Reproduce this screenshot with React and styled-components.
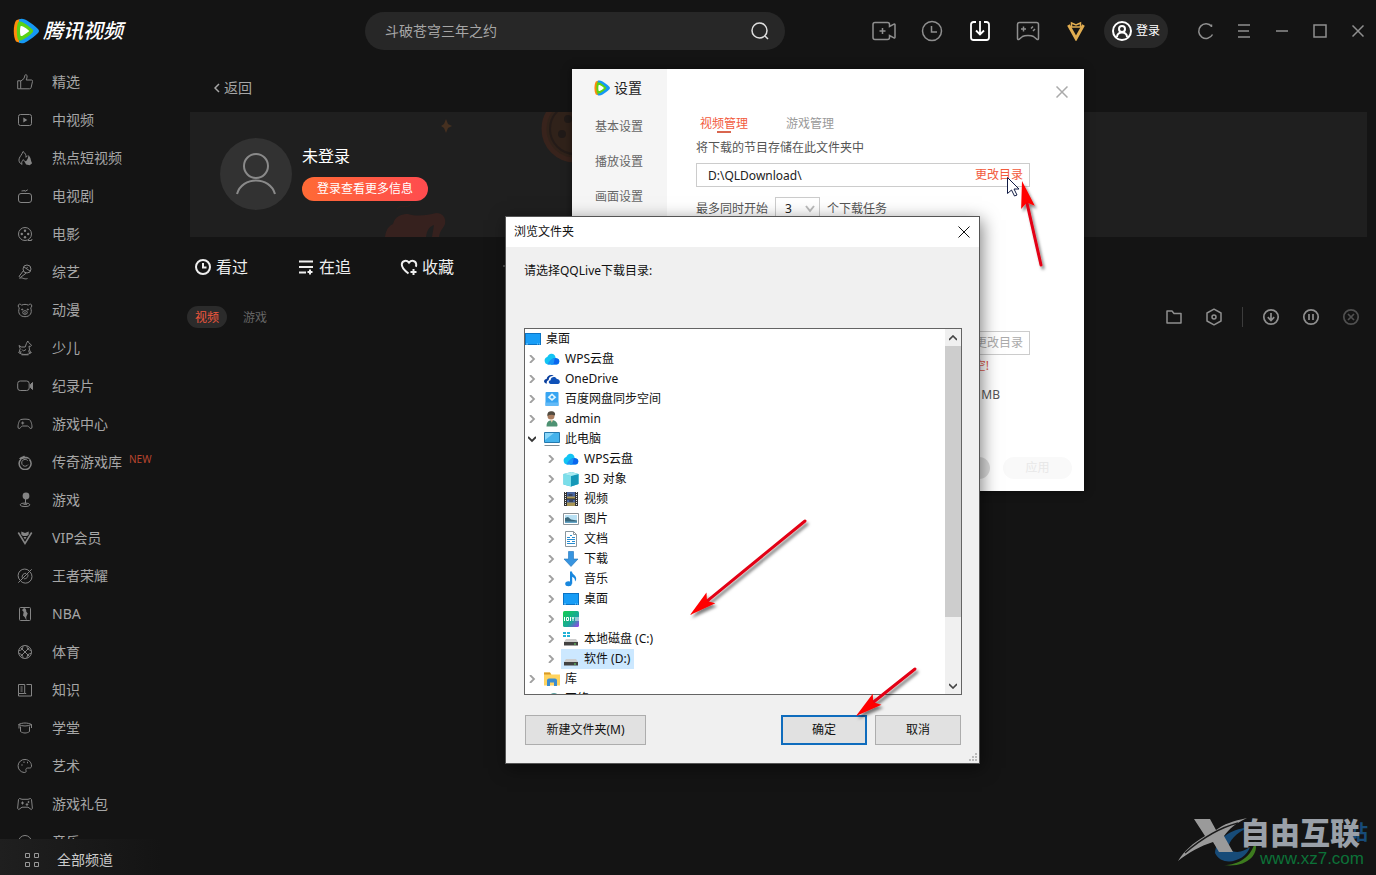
import React, { useState } from "react";
import styled, { createGlobalStyle } from "styled-components";

const channels = [
  { icon: "like", label: "精选" },
  { icon: "video", label: "中视频" },
  { icon: "fire", label: "热点短视频" },
  { icon: "tv", label: "电视剧" },
  { icon: "film", label: "电影" },
  { icon: "mic", label: "综艺" },
  { icon: "bear", label: "动漫" },
  { icon: "horse", label: "少儿" },
  { icon: "camera", label: "纪录片" },
  { icon: "gamepad", label: "游戏中心" },
  { icon: "legend", label: "传奇游戏库", badge: "NEW" },
  { icon: "joystick", label: "游戏" },
  { icon: "vip", label: "VIP会员" },
  { icon: "kings", label: "王者荣耀" },
  { icon: "nba", label: "NBA" },
  { icon: "ball", label: "体育" },
  { icon: "book", label: "知识" },
  { icon: "school", label: "学堂" },
  { icon: "palette", label: "艺术" },
  { icon: "gift", label: "游戏礼包" },
  { icon: "music", label: "音乐" },
];

const folders = [
  { icon: "desktop", label: "桌面", level: 0 },
  { icon: "cloud", label: "WPS云盘", level: 1 },
  { icon: "onedrive", label: "OneDrive", level: 1 },
  { icon: "baidu", label: "百度网盘同步空间", level: 1 },
  { icon: "user", label: "admin", level: 1 },
  { icon: "computer", label: "此电脑", level: 1, open: true },
  { icon: "cloud", label: "WPS云盘", level: 2 },
  { icon: "cube", label: "3D 对象", level: 2 },
  { icon: "movie", label: "视频", level: 2 },
  { icon: "image", label: "图片", level: 2 },
  { icon: "document", label: "文档", level: 2 },
  { icon: "download", label: "下载", level: 2 },
  { icon: "note", label: "音乐", level: 2 },
  { icon: "desktop", label: "桌面", level: 2 },
  { icon: "iqiyi", label: "", level: 2 },
  { icon: "systemDisk", label: "本地磁盘 (C:)", level: 2 },
  { icon: "disk", label: "软件 (D:)", level: 2 },
  { icon: "library", label: "库", level: 1 },
  { icon: "network", label: "网络", level: 1 },
];

const channelIcons = {
  like: (
    <path d="M.7 6.8h3v8h-3zM3.7 7.2 7 4.5 8 1.2c.3-.9 2-.6 2.1.8.1 1.3-.4 2.7-.9 4h5.2c.9 0 1.3.6 1.1 1.4l-1.4 6.2c-.2.8-.7 1.2-1.5 1.2H3.7" />
  ),
  video: (
    <>
      <rect x="1.500" y="2.500" width="13" height="11" rx="2" />
      <path d="M6.300 5.500v5l4-2.500z" fill="currentColor" stroke="none" />
    </>
  ),
  fire: (
    <>
      <path d="M5.200 14.500C2.400 13.400 1.300 10.800 2.300 8.200c.7-1.800 2.600-3.500 3.700-6.700 2.300 1.600 3.300 3.700 3 5.800l1.500-1.600M5 14.200c-.9-2 .2-3 1.300-4.600l1.500 2" />
      <path d="m11.600 5 1.800 3 .8 3.200.9 2-2.400 2-3.600-.8-1.700-2.900 2.100-.8 1.300-2.200z" fill="currentColor" stroke="none" />
    </>
  ),
  tv: (
    <>
      <rect x="1.500" y="5.500" width="13" height="9" rx="2.500" />
      <path d="m4.500 3 3.500-.4M7.800 3.500l3-1.700" />
    </>
  ),
  film: (
    <>
      <circle cx="8" cy="8" r="6.500" />
      <path d="M11 14.500h3.500l.5-1.500" />
      <g fill="currentColor" stroke="none">
        <circle cx="8" cy="4.800" r="1.200" />
        <circle cx="4.800" cy="8" r="1.200" />
        <circle cx="11.200" cy="8" r="1.200" />
        <circle cx="8" cy="11.200" r="1.200" />
      </g>
    </>
  ),
  mic: (
    <>
      <circle cx="10" cy="5" r="4" />
      <path d="M6.500 6.500 2 12.500l1.300 1 6-4.500M7 3l6 4M2.500 14.500c2.500-2 4.500 1.500 8 0M9.500 4.500l1-1.500" />
    </>
  ),
  bear: (
    <>
      <path d="M4.500 3.200C3.800 1.500 1 1.800 1.200 4c.1 1 .6 1.500 1.100 1.900C.5 11 3 14.700 8 14.700s7.500-3.700 5.700-8.800c.5-.4 1-.9 1.100-1.900.2-2.200-2.600-2.500-3.300-.8-2.200-1.100-4.800-1.100-7 0z" />
      <circle cx="5.200" cy="7.500" r=".6" fill="currentColor" />
      <circle cx="10.800" cy="7.500" r=".6" fill="currentColor" />
      <ellipse cx="8" cy="10.500" rx="2.300" ry="1.800" />
      <path d="M8 10v1.500" />
    </>
  ),
  horse: (
    <path d="M2 5.500 4.500 7h3.700l1.300-3.700L10.800 1l.8 1.500 3 2.800-1.400 1.200-1.200-.4.500 3.900 1.500 3M2 5.500l1.200 3.200-1.200 4M5 9.500l1.500 1.500L9 9.500M1.500 12.500c3.500 2.600 9.500 2.600 13 0M4 11l-.5 2.500M11.500 10.500l1 2.500M4.500 14.800h7" />
  ),
  camera: (
    <>
      <rect x=".7" y="3" width="11.500" height="9.500" rx="2.500" />
      <path d="m15.500 4.500-2 2v3l2 2z" fill="currentColor" />
    </>
  ),
  gamepad: (
    <>
      <path d="M4 3.500c2.600-.5 5.400-.5 8 0 1.700.3 3 4.500 3 7.500 0 2-1.700 2-2.700.5-.6-1-1-1.500-2-1.500H5.700c-1 0-1.400.5-2 1.500C2.700 13 1 13 1 11c0-3 1.300-7.200 3-7.500z" />
      <path d="M5.700 5.500v3M4.200 7h3M10 6.500h.01M11.500 7.800h.01" />
    </>
  ),
  legend: (
    <>
      <path d="M4 5.200a6 6 0 1 0 8.500.3" strokeWidth="1.500" />
      <path d="M10.700 6.600a3.400 3.400 0 1 0 .3 4" />
      <path d="M2 4.800C3.500 2.500 6 2.800 7.200 1.500c.2 1 .8 1.200 2 1.300 2 .1 3.600 1.300 4.300 3.200-2-1.600-4-1.800-6-1.400L4 5.500z" fill="currentColor" stroke="none" />
    </>
  ),
  joystick: (
    <>
      <circle cx="9" cy="4" r="3.400" fill="currentColor" stroke="none" />
      <path d="M8.500 7v4.500" />
      <ellipse cx="8" cy="12.800" rx="4.800" ry="1.800" />
      <path d="M6.500 12.300h3.500" />
    </>
  ),
  vip: (
    <>
      <path d="m1.300 2.500 6.700 11 6.700-11" strokeWidth="1.600" />
      <path d="m4.300 1.500 3.700 1.500 3.700-1.500v3L10 6H6L4.300 4.500zM6.500 7h3L8 9.500z" fill="currentColor" stroke="none" />
    </>
  ),
  kings: (
    <path d="M12.300 3A6.500 6.500 0 0 0 3 12.200M3.800 13.200a6.500 6.500 0 0 0 9.300-9.200M1.300 14.700 14.700 1.300M5.200 9.800c-.6-2.600 1.300-4.700 4-4.500M10.800 6.300c.7 2.600-1.300 4.700-4 4.500" />
  ),
  nba: (
    <>
      <rect x="2.500" y="1.500" width="11" height="13" rx="1" />
      <path d="M7 2c2 .5 2.500 2 2.200 3.500l1.500 2-1.500 3.500.3 3.500L7.600 11 6 9.500 6.700 6 5 4z" fill="currentColor" stroke="none" />
    </>
  ),
  ball: (
    <>
      <circle cx="8" cy="8" r="6.500" />
      <path d="m3.500 3.500 9 9M12.500 3.500l-9 9M6 2c0 3-1.500 4.500-4.200 4.500M10 14c0-3 1.500-4.500 4.200-4.500M10 2c0 2.500 1.500 4 4.200 4.500M6 14c0-2.500-1.500-4-4.200-4.500" />
    </>
  ),
  book: (
    <path d="M1.500 2.500h6.200v9H1.500zM9.500 2.500h5v11.500h-13v-2.500M7.700 11.500h1.500M3.500 5h2.200M3.500 7h2.200M3.500 9h2.200" />
  ),
  school: (
    <path d="M1.500 4.500C5.500 2.500 10.500 2.500 14.500 4.500 10.500 6.500 5.500 6.500 1.500 4.500zM3.500 6.500v5c2.500 2 6.500 2 9 0v-5M2 5v3.500M14.500 4.500V8" />
  ),
  palette: (
    <>
      <path d="M8 1.500a6.500 6.500 0 1 0-.8 13c1.500.2 2.300-.8 1.800-2-.5-1.300.2-2.500 1.700-2.500h2c1.200 0 1.800-.8 1.800-2C14.500 4.300 11.700 1.500 8 1.500z" />
      <path d="M4.500 7h1M6.500 4.200h1M10 4.500h1" strokeWidth="1.500" />
    </>
  ),
  gift: (
    <>
      <path d="M2.500 2.500 5 3.300h6l2.500-.8 1 1 .9 9-1.200 1-3.200-2.300H5l-3.200 2.300-1.200-1 .9-9z" />
      <path d="M5.500 5.500v3M4 7h3" />
      <circle cx="10" cy="8.500" r=".8" fill="currentColor" />
      <circle cx="11.500" cy="6" r=".6" fill="currentColor" />
    </>
  ),
  music: <circle cx="8" cy="8" r="6.500" />,
};

const folderIcons = {
  desktop: (
    <>
      <rect x=".5" y="2.500" width="15" height="11" fill="#189df6" stroke="#0b73c4" />
      <path d="M1 13h14" stroke="#7fd0ff" strokeDasharray="2 9 1 1" />
    </>
  ),
  cloud: (
    <>
      <path d="M4 13.500a3.800 3.800 0 0 1-.7-7.400C4.200 3.700 6 2.300 8 2.800c2.400.3 3.500 2.200 3.600 4.100 2.400.3 3.700 1.500 3.700 3.300 0 2-1.200 3.300-3 3.300z" fill="#12c4f3" />
      <path d="M7 13.500c-.6-3.900.8-6.500 4.600-6.600 2.400.3 3.700 1.500 3.700 3.300 0 2-1.200 3.300-3 3.300z" fill="#0a66ee" />
      <path d="M3.500 13.500C5 11 6 8 11 7c-1 2-.5 4.500-2 6.500z" fill="#1894f6" />
    </>
  ),
  onedrive: (
    <>
      <path d="M2 12.500c-3-.6-2.300-4.600.6-4.500C2.800 4.500 7.500 2.300 10 5.300 7 4.500 4.600 6.500 4.700 9c-2 .5-2.300 2.400-1.700 3.500z" fill="#0a3f9d" />
      <path d="M6.500 13c-2.600-.6-2-3.700.1-3.700C6.500 5.500 11.500 4.700 12.700 7.900c3.500-.3 4.300 4.500 1.300 5.100z" fill="#0f51b8" />
    </>
  ),
  baidu: (
    <>
      <rect x="1.500" y="1" width="13" height="14" rx="1" fill="#38a5f2" />
      <path d="M1.500 11.500h13V15h-13z" fill="#63baf7" />
      <path d="m8 2.300 4.300 3.900L8 10.100 3.700 6.200z" fill="#dff5ff" />
      <circle cx="8" cy="6.200" r="1.400" fill="#38a5f2" />
    </>
  ),
  user: (
    <>
      <path d="M2.500 15.500c0-3 1-5.500 3.500-6l3.500-.3c2.600.5 4 3 4 4.800 0 1-.5 1.500-1 1.500z" fill="#4e9172" />
      <circle cx="7" cy="5" r="3.500" fill="#a97d60" />
      <path d="M3.500 5C2.700 1 5.500-.2 8 .3c2.500.4 3.700 1.700 2.800 4.200C8.500 3.500 6 3.300 3.500 5z" fill="#514b40" />
      <path d="m6.500 8.500 2.500.8-1.300 2.500z" fill="#f0d0b0" />
    </>
  ),
  computer: (
    <>
      <path d="M.5 1.500h15v10H.5z" fill="#45b3ec" stroke="#2479ae" />
      <path d="m1 2 9 0-9 7z" fill="#8ad7fa" />
      <path d="M.5 14.500h15" stroke="#7d8c95" />
    </>
  ),
  cube: (
    <>
      <path d="m.5 3 8-2 7 2v10l-7.500 2.500-7.500-2z" fill="#2fb9d3" />
      <path d="m.5 3 7.500 2v10.500l-7.500-2z" fill="#7bdeea" />
      <path d="m8 5 7.500-2v10L8 15.500z" fill="#1598b8" />
      <path d="m.5 3 8-2 7 2L8 5z" fill="#abebf1" />
    </>
  ),
  movie: (
    <>
      <path d="M1 1h14v14H1z" fill="#333" />
      <path d="M4 1h8v14H4z" fill="#48659f" />
      <path d="M4 5.500h8V8H4zM4 11.500h8V15H4z" fill="#a99655" />
      <path d="M4 8h8M5.500 4h4M6 10h4" stroke="#222" />
      <path d="M2.500 1v14M13.500 1v14" stroke="#eee" strokeDasharray="1 1" />
    </>
  ),
  image: (
    <>
      <path d="M.5 2.500h15v11H.5z" fill="#fff" stroke="#8d9499" />
      <path d="M2 4h12v8H2z" fill="#b9e1f4" />
      <path d="m2 7 3-1 3 2.500 6 1V12H2z" fill="#38677b" />
      <path d="M2 10.500h12V12H2z" fill="#65a5c7" />
    </>
  ),
  document: (
    <>
      <path d="M2.500.5h8l3 3v12h-11z" fill="#fff" stroke="#8a969d" />
      <path d="M10.500.5v3h3" stroke="#8a969d" fill="none" />
      <path d="M7 4.500h2M4 6.500h3M9 6.500h3M4 8.500h8M4 10.500h3M9 10.500h3M4 12.500h8" stroke="#268dd2" />
    </>
  ),
  download: <path d="M5.500.5h5v7.500H15L8 15.500 1 8h4.500z" fill="#3794df" stroke="#1d72ba" strokeWidth=".6" />,
  note: (
    <>
      <ellipse cx="5.500" cy="12.700" rx="3.300" ry="2.500" fill="#1887de" />
      <path d="M7 .5h2c0 3 4.500 3.700 4.200 7.500-.1 1-.7 2-1.200 2.500.3-3-1.300-4-2.800-4.800v7H7z" fill="#1887de" />
    </>
  ),
  iqiyi: (
    <>
      <rect width="16" height="16" rx="1.500" fill="url(#iqiyiFill)" />
      <path d="M1.500 6v4M3.500 6.500h2v3h-2zM7.500 6v4M9 6l1 2 1-2M10 8v2M13 6v4M15 6v4" stroke="#fff" fill="none" />
    </>
  ),
  disk: (
    <>
      <path d="m3 8 10 0 2 3H1z" fill="#ccc" />
      <path d="M1 11h14v3.500H1z" fill="#424242" />
      <path d="M11 13h2" stroke="#66df66" />
    </>
  ),
  systemDisk: (
    <>
      <path d="M0 1h3v2H0zM4 1h3v2H4zM0 4h3v2H0zM4 4h3v2H4z" fill="#22b2d6" />
      <path d="m3 8 10 0 2 3H1z" fill="#ccc" />
      <path d="M1 11h14v3.500H1z" fill="#424242" />
      <path d="M11 13h2" stroke="#66df66" />
    </>
  ),
  library: (
    <>
      <path d="M0 1.500h6l1.500 2H16v11H0z" fill="#ffd35f" />
      <path d="M0 1.500h6l1 2H0z" fill="#d99a25" />
      <path d="M3 15V9.500c0-1.300 1-2 2-2h6c1 0 2 .7 2 2V15h-3v-3.500H6V15z" fill="#3b8dd0" />
    </>
  ),
  network: (
    <>
      <circle cx="10" cy="7.500" r="5.500" fill="#5a9e9d" />
      <path d="M1 7h9v6H1z" fill="#3aa7df" />
    </>
  ),
};

function TencentMark({ size }) {
  return (
    <svg width={size} height={size} viewBox="0 0 26 26">
      <path d="M3 2.500C7 .5 9.500 1 12 5v16c-2.500 4-5 4.500-9 2.500C0 19 0 7 3 2.500z" fill="#ff8a0c" />
      <path d="M6 1.500c2.500-1.500 5-.8 8 1.100 4 2.400 8 5.400 11 8.400 1.300 1.400 1.300 2.600 0 4-3 3-7 6-11 8.400-3 1.900-5.500 2.600-8 1.100z" fill="#1598f5" />
      <path d="M5 4.500c1-1.500 3-1.200 5.500.3 3.500 2 6.500 4.200 9 6.800.9 1 .9 1.800 0 2.800-2.500 2.600-5.500 4.800-9 6.800-2.500 1.500-4.500 1.800-5.500.3-1.500-4-1.500-13 0-17z" fill="#5bd315" />
      <path d="M7.500 8.500c.5-.9 1.400-.5 2.500.1 2.200 1.200 4 2.300 5.500 3.600.7.600.7 1 0 1.600-1.500 1.300-3.300 2.400-5.500 3.600-1.100.6-2 1-2.500.1-.6-2.400-.6-6.600 0-9z" fill="#fff" />
    </svg>
  );
}

function Cross({ size, width = 1 }) {
  return (
    <svg width={size} height={size} viewBox="0 0 12 12" stroke="currentColor" strokeWidth={width}>
      <path d="m.5.5 11 11M11.500.5l-11 11" />
    </svg>
  );
}

function Chevron({ open }) {
  return (
    <svg width="8" height="8" viewBox="0 0 8 8" fill="none" stroke={open ? "#333" : "#a0a0a0"} strokeWidth="1.800">
      <path d={open ? "M0 2l4 4 4-4" : "M2 0l4 4-4 4"} />
    </svg>
  );
}

function Header() {
  return (
    <HeaderBar>
      <Brand href="#">
        <TencentMark size={26} />
        <BrandName>腾讯视频</BrandName>
      </Brand>
      <Search>
        <SearchInput aria-label="搜索" defaultValue="斗破苍穹三年之约" />
        <IconButton aria-label="搜索" $color="#ddd">
          <svg width="20" height="20" viewBox="0 0 20 20" fill="none" stroke="currentColor" strokeWidth="1.500">
            <circle cx="9.500" cy="9.500" r="7.500" />
            <path d="m15 15 3 3" />
          </svg>
        </IconButton>
      </Search>
      <Tools>
        <ToolButton aria-label="放映厅">
          <svg width="24" height="20" viewBox="0 0 24 20" fill="none" stroke="currentColor" strokeWidth="1.500">
            <path d="M3 1.500h12.500c1.300 0 2 .7 2 2v2l4.500-2.300c.6-.3 1 0 1 .6v12.400c0 .6-.4.900-1 .6l-4.500-2.300v2c0 1.300-.7 2-2 2H3c-1.300 0-2-.7-2-2v-13c0-1.300.7-2 2-2z" />
            <path d="M10.500 7v6M7.500 10h6" />
          </svg>
        </ToolButton>
        <ToolButton aria-label="历史">
          <svg width="22" height="22" viewBox="0 0 22 22" fill="none" stroke="currentColor" strokeWidth="1.500">
            <circle cx="11" cy="11" r="9.500" />
            <path d="M10.500 6v6H16" />
          </svg>
        </ToolButton>
        <ToolButton aria-label="下载" $color="#fff">
          <svg width="22" height="22" viewBox="0 0 22 22" fill="none" stroke="currentColor" strokeWidth="1.800">
            <path d="M7 2H4.500C3 2 2 3 2 4.500v13C2 19 3 20 4.500 20h13c1.500 0 2.500-1 2.500-2.500v-13C20 3 19 2 17.500 2H15M11 1v13M7 10.500l4 4 4-4" />
          </svg>
        </ToolButton>
        <ToolButton aria-label="游戏">
          <svg width="24" height="20" viewBox="0 0 24 20" fill="none" stroke="currentColor" strokeWidth="1.500">
            <path d="M3.500 1.500h17c1.300 0 2 .8 2 2v14c0 1-.8 1.300-1.500.8L17.500 15.500c-2.500-1.500-8.500-1.500-11 0L3 18.300c-.7.5-1.500.2-1.500-.8v-14c0-1.200.7-2 2-2z" />
            <path d="M7.500 5.500v5M5 8h5M15 7.500l2-2M17 10l2-2" />
          </svg>
        </ToolButton>
        <ToolButton aria-label="VIP" $color="#e1ad50">
          <svg width="20" height="20" viewBox="0 0 20 20" fill="none" stroke="currentColor">
            <path d="M2.500 4 10 17.500 17.500 4" strokeWidth="3" />
            <path d="m5.500 2 4.500 2 4.500-2v4H5.500z" strokeWidth="1.500" />
          </svg>
        </ToolButton>
        <LoginButton>
          <svg width="20" height="20" viewBox="0 0 20 20" fill="none" stroke="currentColor" strokeWidth="2">
            <circle cx="10" cy="10" r="9" />
            <circle cx="10" cy="8" r="3" />
            <path d="M5 16c0-6 10-6 10 0" />
          </svg>
          登录
        </LoginButton>
        <WindowTools>
          <IconButton aria-label="刷新">
            <svg width="18" height="18" viewBox="0 0 18 18" fill="none" stroke="currentColor" strokeWidth="1.500">
              <path d="M15.500 12.500a7.300 7.300 0 1 1-.8-8M14.500 2.500V5" />
            </svg>
          </IconButton>
          <IconButton aria-label="菜单">
            <svg width="18" height="18" viewBox="0 0 18 18" stroke="currentColor" strokeWidth="1.500">
              <path d="M3 3h12M3 9h11M3 15h12" />
            </svg>
          </IconButton>
          <IconButton aria-label="最小化">
            <svg width="18" height="18" viewBox="0 0 18 18" stroke="currentColor" strokeWidth="1.500">
              <path d="M3 9h12" />
            </svg>
          </IconButton>
          <IconButton aria-label="最大化">
            <svg width="18" height="18" viewBox="0 0 18 18" fill="none" stroke="currentColor" strokeWidth="1.500">
              <rect x="3" y="3" width="12" height="12" />
            </svg>
          </IconButton>
          <IconButton aria-label="关闭">
            <Cross size={12} width={1.500} />
          </IconButton>
        </WindowTools>
      </Tools>
    </HeaderBar>
  );
}

function Sidebar() {
  return (
    <Aside>
      <ChannelList>
        {channels.map((channel) => (
          <ChannelLink href="#" key={channel.label}>
            <svg width="16" height="16" viewBox="0 0 16 16" fill="none" stroke="currentColor">
              {channelIcons[channel.icon]}
            </svg>
            <span>{channel.label}</span>
            {channel.badge && <Badge>{channel.badge}</Badge>}
          </ChannelLink>
        ))}
      </ChannelList>
      <AllChannels>
        <svg width="16" height="16" viewBox="0 0 16 16" fill="none" stroke="#999">
          <path d="M1.500 1.500h4v4h-4zM10.500 1.500h4v4h-4zM1.500 10.500h4v4h-4zM10.500 10.500h4v4h-4z" />
        </svg>
        全部频道
      </AllChannels>
    </Aside>
  );
}

function Profile() {
  return (
    <Banner>
      <BannerArt width="420" height="125" viewBox="0 0 420 125">
        <path d="m256 7 2 5 4 2-4 2-2 5-2-5-3-2 3-2z" fill="#453020" />
        <path d="M195 125c1-8 4-11 8-13 2-8 9-10 15-10 10 3 20 1 28-1 8 0 10 6 9 11-2 5-5 6-6 13h-7l2-12c-5 2-7 5-8 12z" fill="#36211e" />
        <path d="M207 97c4-6 9 1 14-5" stroke="#2b201d" fill="none" />
        <circle cx="385" cy="17" r="31" fill="#30221a" stroke="#38231c" strokeWidth="5" />
        <circle cx="385" cy="17" r="25" fill="none" stroke="#241b18" strokeWidth="2" />
        <circle cx="372" cy="22" r="4" fill="#201a18" />
        <circle cx="378" cy="7" r="4" fill="#201a18" />
      </BannerArt>
      <Avatar>
        <svg width="40" height="44" viewBox="0 0 40 44" fill="none" stroke="#8a8a8a" strokeWidth="2">
          <circle cx="20" cy="14" r="12" />
          <path d="M1 42c5-18 33-18 38 0" />
        </svg>
      </Avatar>
      <ProfileText>
        <UserName>未登录</UserName>
        <MoreButton>登录查看更多信息</MoreButton>
      </ProfileText>
    </Banner>
  );
}

function Library() {
  return (
    <>
      <LibraryTabs>
        <LibraryTab>
          <svg width="18" height="18" viewBox="0 0 18 18" fill="none" stroke="currentColor" strokeWidth="2">
            <circle cx="9" cy="9" r="7" />
            <path d="M9 5v4.500h3.500" />
          </svg>
          看过
        </LibraryTab>
        <LibraryTab>
          <svg width="18" height="18" viewBox="0 0 18 18" fill="none" stroke="currentColor" strokeWidth="2">
            <path d="M2 3.500h14M2 9h14M2 14.500h7M13 11.500v5M10.500 14h5" />
          </svg>
          在追
        </LibraryTab>
        <LibraryTab>
          <svg width="18" height="18" viewBox="0 0 18 18" fill="none" stroke="currentColor" strokeWidth="2">
            <path d="M8.500 15.500C3 11.500 1.500 9 1.800 6.200 2.300 2.500 6.500 1.700 9 4.700c2.500-3 6.700-2.200 7.200 1.500.1 1 0 1.800-.4 2.600M13.500 11v6M10.500 14h6" />
          </svg>
          收藏
        </LibraryTab>
        <LibraryTab aria-label="预约">
          <svg width="18" height="18" viewBox="0 0 18 18" fill="none" stroke="#888" strokeWidth="1">
            <path d="M0 8h16" />
          </svg>
        </LibraryTab>
      </LibraryTabs>
      <FilterRow>
        <FilterButton $active>视频</FilterButton>
        <FilterButton>游戏</FilterButton>
        <Actions>
          <IconButton aria-label="文件夹">
            <svg width="18" height="18" viewBox="0 0 18 18" fill="none" stroke="currentColor" strokeWidth="1.500">
              <path d="M2 3h5l2 2.500h7V15H2z" strokeLinejoin="round" />
            </svg>
          </IconButton>
          <IconButton aria-label="下载设置">
            <svg width="18" height="18" viewBox="0 0 18 18" fill="none" stroke="currentColor" strokeWidth="1.500">
              <path d="m9 1.200 7 3.800v8l-7 3.800L2 13V5z" strokeLinejoin="round" />
              <circle cx="9" cy="9" r="2" />
            </svg>
          </IconButton>
          <Divider />
          <IconButton aria-label="全部开始">
            <svg width="18" height="18" viewBox="0 0 18 18" fill="none" stroke="currentColor" strokeWidth="1.700">
              <circle cx="9" cy="9" r="7.200" />
              <path d="M9 5v7.500M5.800 9.200 9 12.500l3.200-3.300" />
            </svg>
          </IconButton>
          <IconButton aria-label="全部暂停">
            <svg width="18" height="18" viewBox="0 0 18 18" fill="none" stroke="currentColor" strokeWidth="1.700">
              <circle cx="9" cy="9" r="7.200" />
              <path d="M7 6v6M11 6v6" />
            </svg>
          </IconButton>
          <IconButton aria-label="全部删除" $color="#505050">
            <svg width="18" height="18" viewBox="0 0 18 18" fill="none" stroke="currentColor" strokeWidth="1.700">
              <circle cx="9" cy="9" r="7.200" />
              <path d="m6 6 6 6M12 6l-6 6" />
            </svg>
          </IconButton>
        </Actions>
      </FilterRow>
    </>
  );
}

function SettingsWindow() {
  return (
    <Settings>
      <SettingsNav>
        <SettingsTitle>
          <TencentMark size={16} />
          设置
        </SettingsTitle>
        <SettingsLink href="#">基本设置</SettingsLink>
        <SettingsLink href="#">播放设置</SettingsLink>
        <SettingsLink href="#">画面设置</SettingsLink>
      </SettingsNav>
      <SettingsBody>
        <SettingsClose aria-label="关闭" $color="#aaa">
          <Cross size={12} width={1.500} />
        </SettingsClose>
        <SettingsTabs>
          <SettingsTab $active>视频管理</SettingsTab>
          <SettingsTab>游戏管理</SettingsTab>
        </SettingsTabs>
        <FieldLabel htmlFor="downloadPath">将下载的节目存储在此文件夹中</FieldLabel>
        <PathField>
          <PathInput id="downloadPath" defaultValue="D:\QLDownload\" />
          <ChangeButton>更改目录</ChangeButton>
        </PathField>
        <TaskRow>
          <label htmlFor="taskCount">最多同时开始</label>
          <SelectBox>
            <TaskSelect id="taskCount" defaultValue="3">
              <option>1</option>
              <option>2</option>
              <option>3</option>
            </TaskSelect>
            <svg width="10" height="8" viewBox="0 0 10 8" fill="none" stroke="#bbb" strokeWidth="2">
              <path d="m1 1 4 5 4-5" />
            </svg>
          </SelectBox>
          <span>个下载任务</span>
        </TaskRow>
        <CacheGroup>
          <PathField>
            <PathInput aria-label="缓存目录" disabled />
            <ChangeButton disabled>更改目录</ChangeButton>
          </PathField>
          <Warning>空!</Warning>
          <Unit>MB</Unit>
        </CacheGroup>
        <SettingsFooter>
          <RoundButton aria-label="取消" $color="#ddd" />
          <RoundButton $color="#f9f9f9">应用</RoundButton>
        </SettingsFooter>
      </SettingsBody>
    </Settings>
  );
}

function FolderDialog() {
  const [selected, setSelected] = useState(16);

  return (
    <Dialog role="dialog" aria-labelledby="dialogTitle">
      <DialogTitle>
        <span id="dialogTitle">浏览文件夹</span>
        <IconButton aria-label="关闭" $color="#111">
          <Cross size={12} />
        </IconButton>
      </DialogTitle>
      <DialogBody>
        <DialogText>请选择QQLive下载目录:</DialogText>
        <TreeBox>
          <Tree role="tree">
            {folders.map((folder, index) => (
              <TreeRow
                key={index}
                role="treeitem"
                aria-selected={selected === index}
                $level={folder.level}
                onClick={() => setSelected(index)}
              >
                {folder.level > 0 && (
                  <Toggle>
                    <Chevron open={folder.open} />
                  </Toggle>
                )}
                <TreeItem $selected={selected === index}>
                  <svg width="16" height="16" viewBox="0 0 16 16">
                    {folderIcons[folder.icon]}
                  </svg>
                  {folder.label}
                </TreeItem>
              </TreeRow>
            ))}
          </Tree>
          <Scrollbar>
            <ScrollArrow>
              <svg width="8" height="6" viewBox="0 0 8 6" fill="none" stroke="#444" strokeWidth="1.600">
                <path d="m0 5 4-4 4 4" />
              </svg>
            </ScrollArrow>
            <ScrollThumb />
            <ScrollArrow>
              <svg width="8" height="6" viewBox="0 0 8 6" fill="none" stroke="#444" strokeWidth="1.600">
                <path d="m0 1 4 4 4-4" />
              </svg>
            </ScrollArrow>
          </Scrollbar>
        </TreeBox>
        <DialogButtons>
          <DialogButton $wide>新建文件夹(M)</DialogButton>
          <DialogButton $primary>确定</DialogButton>
          <DialogButton>取消</DialogButton>
        </DialogButtons>
      </DialogBody>
      <Grip width="10" height="10" viewBox="0 0 10 10" fill="#bbb">
        <path d="M6 0h2v2H6zM3 3h2v2H3zM6 3h2v2H6zM0 6h2v2H0zM3 6h2v2H3zM6 6h2v2H6z" />
      </Grip>
    </Dialog>
  );
}

function Arrow({ from, to }) {
  const dx = to[0] - from[0];
  const dy = to[1] - from[1];
  const length = Math.hypot(dx, dy);
  const angle = (Math.atan2(dy, dx) * 180) / Math.PI;

  return (
    <g filter="url(#arrowShadow)">
      <g transform={`translate(${to[0]} ${to[1]}) rotate(${angle})`}>
        <path d={`M${-length} 0H-22`} stroke="#e30613" strokeWidth="3" strokeLinecap="round" />
        <path d="M0 0-27-7-22 0-27 7z" fill="#f00" />
      </g>
    </g>
  );
}

function Annotations() {
  return (
    <Overlay>
      <defs>
        <filter id="arrowShadow" filterUnits="userSpaceOnUse" x="0" y="0" width="100%" height="100%">
          <feDropShadow dx="2" dy="3" stdDeviation="1.500" floodColor="#000" floodOpacity=".5" />
        </filter>
        <linearGradient id="iqiyiFill" x1="0" y1="0" x2="1" y2="1">
          <stop offset=".1" stopColor="#12c95a" />
          <stop offset=".6" stopColor="#19a79a" />
          <stop offset="1" stopColor="#a03bf0" />
        </linearGradient>
      </defs>
      <Arrow from={[1041, 265]} to={[1022, 181]} />
      <Arrow from={[805, 521]} to={[690, 615]} />
      <Arrow from={[915, 669]} to={[856, 716]} />
      <path d="M1007.500 177.500v16l4-3.500 3 6 2.500-1-3-6h5z" fill="#fff" stroke="#111b44" />
    </Overlay>
  );
}

function Watermark() {
  return (
    <Mark>
      <svg width="84" height="52" viewBox="0 0 84 52">
        <path d="M37 37c1-14 14-23 34-26-13 6-20 13-21 22 8 5 15 3 22-2-4 14-28 21-35 6z" fill="#174b78" />
        <path d="M46 49c14 0 28-8 31-24 5 14-9 27-31 24z" fill="#3d7b1e" />
        <path d="M16 3h16l6 11C46 8 55 5 69 2 58 7 51 13 46 20l9 16H41l-6-10C22 30 10 37 0 45c6-10 15-18 27-25z" fill="#9a9a9a" />
        <path d="M7 37C22 24 40 12 60 7" stroke="#1b1b1b" strokeWidth="1.500" fill="none" />
      </svg>
      <MarkText>
        <MarkName>
          自由互联
          <MarkTail>站</MarkTail>
        </MarkName>
        <MarkUrl>www.xz7.com</MarkUrl>
      </MarkText>
    </Mark>
  );
}

function App() {
  return (
    <Page>
      <GlobalStyle />
      <Header />
      <Content>
        <Sidebar />
        <Main>
          <BackLink href="#">
            <svg width="6" height="10" viewBox="0 0 6 10" fill="none" stroke="currentColor" strokeWidth="1.500">
              <path d="M5 1 1 5l4 4" />
            </svg>
            返回
          </BackLink>
          <Profile />
          <Library />
        </Main>
      </Content>
      <SettingsWindow />
      <FolderDialog />
      <Watermark />
      <Annotations />
    </Page>
  );
}

const GlobalStyle = createGlobalStyle`
  * {
    box-sizing: border-box;
  }

  body {
    margin: 0;
    background: #141414;
    font-family: "Noto Sans", "Noto Sans CJK SC", sans-serif;
    font-size: 12px;
    line-height: 20px;
  }

  button, input, select {
    font: inherit;
    border: 0;
    padding: 0;
    margin: 0;
    background: none;
    color: inherit;
  }

  a {
    color: inherit;
    text-decoration: none;
  }

  svg {
    display: block;
    flex-shrink: 0;
  }
`;

const Page = styled.div`
  position: relative;
  display: flex;
  flex-direction: column;
  height: 100vh;
  overflow: hidden;
  background: #141414;
  color: #a6a6a6;
`;

const HeaderBar = styled.header`
  display: flex;
  align-items: center;
  height: 62px;
  padding: 0 9px 0 13px;
`;

const Brand = styled.a`
  display: flex;
  align-items: center;
  gap: 4px;
  width: 352px;
`;

const BrandName = styled.span`
  font-size: 20px;
  line-height: 28px;
  font-style: italic;
  font-weight: 500;
  color: #fff;
`;

const Search = styled.div`
  display: flex;
  align-items: center;
  flex: 0 1 420px;
  height: 38px;
  padding: 0 15px 0 20px;
  border-radius: 19px;
  background: #272727;
`;

const SearchInput = styled.input`
  flex: 1;
  min-width: 0;
  font-size: 14px;
  outline: 0;
`;

const IconButton = styled.button`
  display: flex;
  align-items: center;
  justify-content: center;
  color: ${({ $color }) => $color || "#8f8f8f"};
  cursor: pointer;
`;

const ToolButton = styled(IconButton)`
  width: 24px;
`;

const Tools = styled.div`
  display: flex;
  align-items: center;
  gap: 24px;
  margin-left: auto;
`;

const LoginButton = styled.button`
  display: flex;
  align-items: center;
  justify-content: center;
  gap: 4px;
  width: 64px;
  height: 34px;
  margin-left: -8px;
  border-radius: 17px;
  background: #282828;
  color: #fff;
`;

const WindowTools = styled.div`
  display: flex;
  align-items: center;
  gap: 20px;
  margin-left: 5px;

  & > button {
    width: 18px;
    height: 18px;
  }
`;

const Content = styled.div`
  display: flex;
  flex: 1;
  min-height: 0;
`;

const Aside = styled.aside`
  display: flex;
  flex-direction: column;
  flex: 0 0 190px;
`;

const ChannelList = styled.nav`
  flex: 1;
  min-height: 0;
  padding-top: 1px;
  overflow: hidden;
`;

const ChannelLink = styled.a`
  display: flex;
  align-items: center;
  height: 38px;
  padding-left: 17px;
  font-size: 14px;

  & > svg {
    margin-right: 19px;
    color: #858585;
  }
`;

const Badge = styled.sup`
  align-self: flex-start;
  margin-left: 7px;
  padding-top: 6px;
  font-size: 10px;
  line-height: 20px;
  color: #b9452e;
`;

const AllChannels = styled.button`
  display: flex;
  align-items: center;
  gap: 17px;
  height: 36px;
  padding: 5px 0 0 24px;
  background: linear-gradient(90deg, #1f1f1f, #141414 85%);
  color: #ccc;
  font-size: 14px;
`;

const Main = styled.main`
  flex: 1;
  min-width: 0;
`;

const BackLink = styled.a`
  display: flex;
  align-items: center;
  gap: 4px;
  height: 50px;
  padding: 2px 0 0 24px;
  font-size: 14px;
`;

const Banner = styled.section`
  position: relative;
  display: flex;
  align-items: center;
  gap: 10px;
  height: 125px;
  margin-right: 9px;
  padding: 0 0 2px 30px;
  overflow: hidden;
  background: #1f1f1f;
`;

const BannerArt = styled.svg`
  position: absolute;
  top: 0;
  left: 0;
`;

const Avatar = styled.div`
  display: flex;
  align-items: center;
  justify-content: center;
  width: 72px;
  height: 72px;
  border-radius: 50%;
  background: #323232;
`;

const ProfileText = styled.div`
  position: relative;
  display: flex;
  flex-direction: column;
  gap: 11px;
`;

const UserName = styled.div`
  font-size: 16px;
  line-height: 20px;
  color: #fff;
`;

const MoreButton = styled.button`
  width: 126px;
  height: 24px;
  border-radius: 12px;
  background: linear-gradient(90deg, #ff6a35, #ff4b4f);
  color: #fff;
`;

const LibraryTabs = styled.div`
  display: flex;
  height: 60px;
  padding-left: 4px;
`;

const LibraryTab = styled.button`
  display: flex;
  align-items: center;
  gap: 4px;
  width: 103px;
  font-size: 16px;
  color: #eee;
`;

const FilterRow = styled.div`
  display: flex;
  align-items: center;
  height: 40px;
  padding-right: 16px;
`;

const FilterButton = styled.button`
  width: 40px;
  height: 22px;
  margin-left: ${({ $active }) => ($active ? "-3px" : "8px")};
  padding-top: 1px;
  border-radius: 11px;
  background: ${({ $active }) => ($active ? "#2b2b2b" : "none")};
  color: ${({ $active }) => ($active ? "#f2583e" : "#666")};
`;

const Actions = styled.div`
  display: flex;
  align-items: center;
  gap: 22px;
  margin-left: auto;
`;

const Divider = styled.span`
  width: 1px;
  height: 20px;
  margin: 0 -3px;
  background: #3c3c3c;
`;

const Settings = styled.section`
  position: absolute;
  top: 69px;
  left: 572px;
  display: flex;
  width: 512px;
  height: 422px;
  background: #fff;
  box-shadow: 0 0 8px rgba(0, 0, 0, 0.5);
  color: #555;
`;

const SettingsNav = styled.nav`
  display: flex;
  flex-direction: column;
  width: 95px;
  padding-top: 3px;
  background: #f5f5f5;
`;

const SettingsTitle = styled.div`
  display: flex;
  align-items: center;
  gap: 4px;
  height: 32px;
  margin-bottom: 5px;
  padding-left: 22px;
  font-size: 14px;
  color: #222;
`;

const SettingsLink = styled.a`
  padding-left: 23px;
  line-height: 35px;
  color: #666;
`;

const SettingsBody = styled.div`
  display: flex;
  flex-direction: column;
  flex: 1;
  padding: 16px 12px 12px 29px;
`;

const SettingsClose = styled(IconButton)`
  align-self: flex-end;
  margin-right: 4px;
  height: 14px;
`;

const SettingsTabs = styled.div`
  display: flex;
  gap: 38px;
  margin: 15px 0 4px 4px;
`;

const SettingsTab = styled.button`
  display: flex;
  flex-direction: column;
  align-items: center;
  height: 20px;
  color: ${({ $active }) => ($active ? "#f25a3c" : "#999")};

  &::after {
    content: "";
    width: 14px;
    height: 2px;
    margin-top: -3px;
    background: ${({ $active }) => ($active ? "#d9664f" : "none")};
  }
`;

const FieldLabel = styled.label`
  margin: 0 0 5px;
`;

const PathField = styled.div`
  display: flex;
  align-items: center;
  height: 24px;
  margin-right: 42px;
  padding: 0 6px 0 11px;
  border: 1px solid #ccc;
`;

const PathInput = styled.input`
  flex: 1;
  min-width: 0;
  padding-top: 1px;
  color: #222;
`;

const ChangeButton = styled.button`
  color: #f25a3c;
  cursor: pointer;

  &:disabled {
    color: #aaa;
  }
`;

const TaskRow = styled.div`
  display: flex;
  align-items: center;
  gap: 7px;
  margin-top: 10px;
`;

const SelectBox = styled.div`
  display: flex;
  align-items: center;
  width: 45px;
  height: 24px;
  padding-right: 4px;
  border: 1px solid #ccc;
`;

const TaskSelect = styled.select`
  flex: 1;
  min-width: 0;
  padding-left: 9px;
  appearance: none;
  color: #222;
`;

const CacheGroup = styled.div`
  display: flex;
  flex-direction: column;
  margin-top: 110px;
`;

const Warning = styled.span`
  align-self: flex-end;
  margin: 1px 83px 0 0;
  color: #e05a4c;
`;

const Unit = styled.span`
  align-self: flex-end;
  margin: 9px 72px 0 0;
`;

const SettingsFooter = styled.div`
  display: flex;
  justify-content: flex-end;
  gap: 13px;
  margin-top: auto;
`;

const RoundButton = styled.button`
  width: 69px;
  height: 22px;
  border-radius: 11px;
  background: ${({ $color }) => $color};
  color: #e8e8e8;
`;

const Dialog = styled.section`
  position: absolute;
  top: 216px;
  left: 505px;
  width: 475px;
  border: 1px solid #555;
  background: #f0f0f0;
  box-shadow: 2px 4px 16px rgba(0, 0, 0, 0.5);
  color: #111;
`;

const DialogTitle = styled.div`
  display: flex;
  align-items: center;
  justify-content: space-between;
  height: 30px;
  padding: 0 9px 1px 8px;
  background: #fff;
`;

const DialogBody = styled.div`
  padding: 14px 17px 18px 18px;
`;

const DialogText = styled.p`
  margin: 0 0 47px;
`;

const TreeBox = styled.div`
  display: flex;
  height: 367px;
  border: 1px solid #646464;
  background: #fff;
`;

const Tree = styled.ul`
  flex: 1;
  margin: 0;
  padding: 0;
  overflow: hidden;
  list-style: none;
`;

const TreeRow = styled.li`
  display: flex;
  height: 20px;
  padding-left: ${({ $level }) => ($level === 2 ? 19 : 0)}px;
`;

const Toggle = styled.span`
  display: flex;
  align-items: center;
  width: 17px;
  padding-left: 3px;
`;

const TreeItem = styled.span`
  display: flex;
  align-items: center;
  gap: 5px;
  padding: 0 4px 0 ${({ $selected }) => ($selected ? 2 : 0)}px;
  margin-left: ${({ $selected }) => ($selected ? 0 : 2)}px;
  background: ${({ $selected }) => ($selected ? "#cce8ff" : "none")};

  ${TreeRow}:first-child & {
    margin-left: 0;
  }
`;

const Scrollbar = styled.div`
  display: flex;
  flex-direction: column;
  width: 16px;
  background: #f0f0f0;
`;

const ScrollArrow = styled.div`
  display: flex;
  align-items: center;
  justify-content: center;
  height: 17px;
`;

const ScrollThumb = styled.div`
  flex: 0 0 271px;
  margin-bottom: auto;
  background: #cdcdcd;
`;

const DialogButtons = styled.div`
  display: flex;
  gap: 8px;
  margin: 20px 1px 0;
`;

const DialogButton = styled.button`
  width: ${({ $wide }) => ($wide ? 121 : 86)}px;
  height: 30px;
  margin-right: ${({ $wide }) => ($wide ? "auto" : 0)};
  border: ${({ $primary }) => ($primary ? "2px solid #0f6cbd" : "1px solid #adadad")};
  background: #e1e1e1;
`;

const Grip = styled.svg`
  position: absolute;
  right: 0;
  bottom: 0;
`;

const Mark = styled.div`
  position: absolute;
  right: 12px;
  bottom: 7px;
  display: flex;
`;

const MarkText = styled.div`
  display: flex;
  flex-direction: column;
  margin-left: -22px;
`;

const MarkName = styled.div`
  position: relative;
  isolation: isolate;
  font-size: 30px;
  line-height: 34px;
  font-weight: 900;
  color: #9aa0a8;
`;

const MarkTail = styled.span`
  position: absolute;
  right: -4px;
  z-index: -1;
  font-size: 20px;
  font-weight: 700;
  color: #174b78;
`;

const MarkUrl = styled.div`
  padding-left: 20px;
  font-family: "Liberation Sans", sans-serif;
  font-size: 17px;
  line-height: 18px;
  color: #0c7138;
`;

const Overlay = styled.svg`
  position: absolute;
  inset: 0;
  width: 100%;
  height: 100%;
  pointer-events: none;
`;

export default App;
